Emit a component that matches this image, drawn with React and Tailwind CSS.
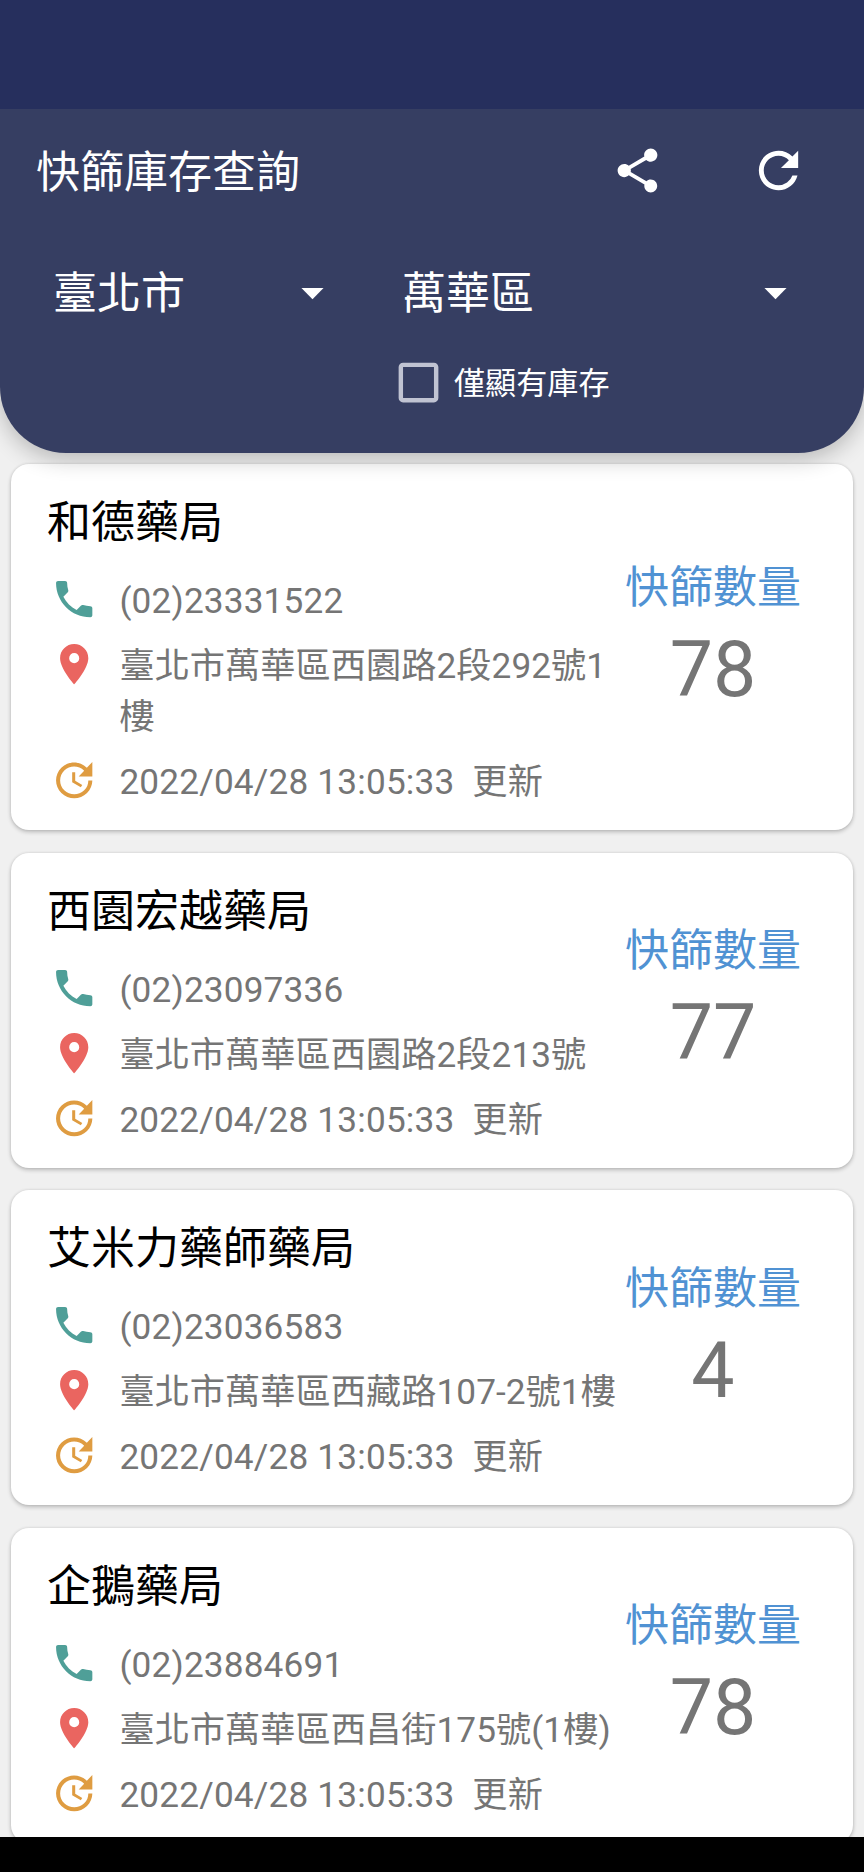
import React from "react";
import {
  MdShare,
  MdRefresh,
  MdArrowDropDown,
  MdCheckBoxOutlineBlank,
  MdPhone,
  MdLocationOn,
  MdUpdate,
} from "react-icons/md";

const pharmacies = [
  { name: "和德藥局", phone: "(02)23331522", address: "臺北市萬華區西園路2段292號1樓", updated: "2022/04/28 13:05:33", count: 78 },
  { name: "西園宏越藥局", phone: "(02)23097336", address: "臺北市萬華區西園路2段213號", updated: "2022/04/28 13:05:33", count: 77 },
  { name: "艾米力藥師藥局", phone: "(02)23036583", address: "臺北市萬華區西藏路107-2號1樓", updated: "2022/04/28 13:05:33", count: 4 },
  { name: "企鵝藥局", phone: "(02)23884691", address: "臺北市萬華區西昌街175號(1樓)", updated: "2022/04/28 13:05:33", count: 78 },
];

function Row({ icon: Icon, color, tracking, children }) {
  return (
    <div className="flex items-start">
      <Icon className={`h-[48.4px] w-[48.4px] shrink-0 ${color}`} />
      <div className={`ml-[21px] -mb-px w-[502px] whitespace-pre-wrap break-all pt-px text-[35.2px] leading-[51px] text-[#757575] ${tracking}`}>
        {children}
      </div>
    </div>
  );
}

function PharmacyCard({ item }) {
  return (
    <article className="flex shrink-0 items-center rounded-[18px] bg-white pt-[27px] pb-[23px] pl-[36px] shadow-[0_2px_4px_rgba(0,0,0,0.22),0_0_3px_rgba(0,0,0,0.1)]">
      <div className="w-[578px] shrink-0">
        <h2 className="text-[44px] leading-[64px] text-black">{item.name}</h2>
        <div className="mt-[20px] flex flex-col gap-[14px] pl-[3px]">
          <Row icon={MdPhone} color="text-[#4f9f98]" tracking="tracking-[0.16px]">{item.phone}</Row>
          <Row icon={MdLocationOn} color="text-[#ea6560]" tracking="tracking-[0.05px]">{item.address}</Row>
          <Row icon={MdUpdate} color="text-[#df9c41]" tracking="tracking-[0.18px]">{item.updated + "  更新"}</Row>
        </div>
      </div>
      <div className="flex w-[176px] shrink-0 flex-col items-center pb-[25px]">
        <div className="whitespace-nowrap text-[44px] leading-[64px] text-[#5092d3]">快篩數量</div>
        <div className="mt-[4px] text-[77px] leading-[93px] text-[#757575]">{item.count}</div>
      </div>
    </article>
  );
}

export default function App() {
  return (
    <div className="flex h-[1872px] w-[864px] flex-col overflow-hidden bg-[#f0f0f0] font-['Roboto','Noto_Sans_CJK_TC',sans-serif]">
      <div className="relative z-20 h-[109px] shrink-0 bg-[#262f5d]" />
      <header className="relative z-10 h-[343.5px] shrink-0 rounded-b-[66px] bg-[#363e62] text-white shadow-[0_6px_22px_rgba(0,0,0,0.24)]">
        <div className="flex h-[123px] items-center pl-[36px] pr-[56px]">
          <h1 className="flex-1 pt-[5px] text-[44px] leading-[64px]">快篩庫存查詢</h1>
          <MdShare className="h-[53px] w-[53px]" />
          <MdRefresh className="ml-[85px] h-[59px] w-[59px]" />
        </div>
        <div className="flex h-[120px] items-center pl-[53px]">
          <div className="flex w-[286px] items-center justify-between text-[44px] leading-[64px]">
            <span className="pt-[4px]">臺北市</span>
            <MdArrowDropDown className="h-[53px] w-[53px]" />
          </div>
          <div className="ml-[63px] flex w-[400px] items-center justify-between text-[44px] leading-[64px]">
            <span className="pt-[4px]">萬華區</span>
            <MdArrowDropDown className="h-[53px] w-[53px]" />
          </div>
        </div>
        <div className="flex h-[60px] items-center pl-[392px]">
          <MdCheckBoxOutlineBlank className="h-[53px] w-[53px] text-[#c0c3d2]" />
          <span className="ml-[9px] pt-[2px] text-[31.1px] leading-[45px]">僅顯有庫存</span>
        </div>
      </header>
      <main className="flex min-h-0 flex-1 flex-col gap-[22.6px] overflow-hidden px-[11px] pt-[11.5px]">
        {pharmacies.map((item) => (
          <PharmacyCard key={item.name} item={item} />
        ))}
      </main>
      <div className="h-[35px] shrink-0 bg-black" />
    </div>
  );
}
